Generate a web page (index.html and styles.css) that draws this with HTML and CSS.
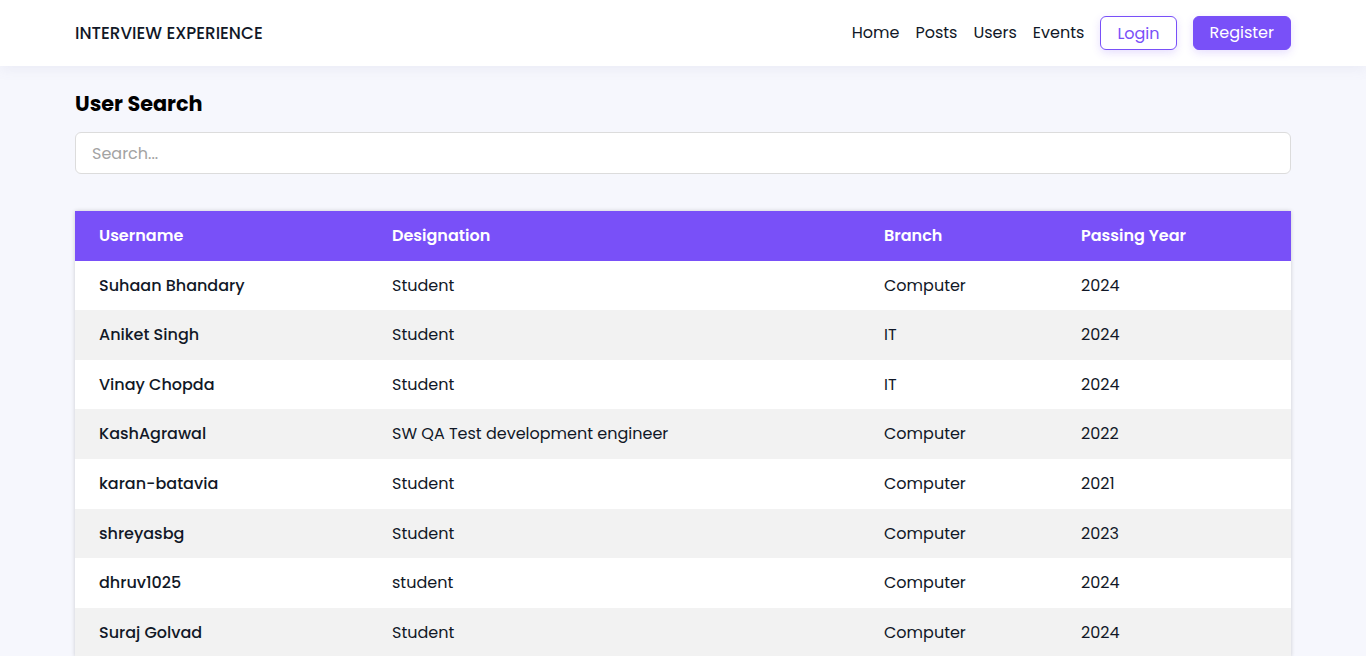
FILE: index.html
```html
<!DOCTYPE html>
<html lang="en">
<head>
<meta charset="utf-8">
<title>Interview Experience - Users</title>
<link rel="stylesheet" href="styles.css">
</head>
<body>
<header class="navbar">
  <div class="nav-inner">
    <a class="brand" href="#">INTERVIEW EXPERIENCE</a>
    <nav class="nav-links">
      <a href="#">Home</a>
      <a href="#">Posts</a>
      <a href="#">Users</a>
      <a href="#">Events</a>
      <a href="#" class="btn btn-outline">Login</a>
      <a href="#" class="btn btn-primary">Register</a>
    </nav>
  </div>
</header>
<main class="content">
  <h1 class="title">User Search</h1>
  <input class="search" type="text" placeholder="Search...">
  <div class="table-wrap">
    <table class="users">
      <colgroup>
        <col class="c1"><col class="c2"><col class="c3"><col class="c4">
      </colgroup>
      <thead>
        <tr><th>Username</th><th>Designation</th><th>Branch</th><th>Passing Year</th></tr>
      </thead>
      <tbody>
        <tr><td class="name">Suhaan Bhandary</td><td>Student</td><td>Computer</td><td>2024</td></tr>
        <tr><td class="name">Aniket Singh</td><td>Student</td><td>IT</td><td>2024</td></tr>
        <tr><td class="name">Vinay Chopda</td><td>Student</td><td>IT</td><td>2024</td></tr>
        <tr><td class="name">KashAgrawal</td><td>SW QA Test development engineer</td><td>Computer</td><td>2022</td></tr>
        <tr><td class="name">karan-batavia</td><td>Student</td><td>Computer</td><td>2021</td></tr>
        <tr><td class="name">shreyasbg</td><td>Student</td><td>Computer</td><td>2023</td></tr>
        <tr><td class="name">dhruv1025</td><td>student</td><td>Computer</td><td>2024</td></tr>
        <tr><td class="name">Suraj Golvad</td><td>Student</td><td>Computer</td><td>2024</td></tr>
      </tbody>
    </table>
  </div>
</main>
</body>
</html>
```
FILE: styles.css
```css
* { box-sizing: border-box; }
html, body { margin: 0; padding: 0; }
body {
  background: #f6f7fd;
  font-family: "Poppins", "Open Sans", sans-serif;
  color: #111827;
}
a { text-decoration: none; color: inherit; }

.navbar {
  background: #ffffff;
  height: 66px;
  box-shadow: 0 4px 12px rgba(120, 120, 160, 0.08);
}
.nav-inner {
  max-width: 1216px;
  margin: 0 auto;
  height: 100%;
  padding-bottom: 1px;
  display: flex;
  align-items: center;
  justify-content: space-between;
}
.brand {
  font-size: 16.8px;
  font-weight: 500;
  color: #111827;
}
.nav-links {
  display: flex;
  align-items: center;
  gap: 16px;
  font-size: 16px;
  color: #111827;
}
.btn {
  display: inline-block;
  height: 34px;
  line-height: 33px;
  border-radius: 6px;
  padding: 0 16px;
  border: 1px solid #7950f8;
  box-shadow: 0 3px 8px rgba(121, 80, 248, 0.18);
}
.btn-outline { color: #7950f8; background: #fff; }
.btn-primary { color: #fff; background: #7950f8; line-height: 31px; }

.content {
  max-width: 1216px;
  margin: 0 auto;
  padding-top: 24px;
}
.title {
  margin: 0;
  font-size: 20.8px;
  font-weight: 700;
  line-height: 28px;
  color: #000;
}
.search {
  display: block;
  width: 100%;
  height: 42px;
  margin-top: 14px;
  padding: 0 16px;
  border: 1px solid #dcdcdc;
  border-radius: 6px;
  background: #fff;
  font-family: inherit;
  font-size: 16px;
  color: #111827;
}
.search::placeholder { color: #a3a3a3; }

.table-wrap {
  margin-top: 37px;
  background: #fff;
  box-shadow: 0 0 4px rgba(0, 0, 0, 0.18);
}
.users {
  width: 100%;
  border-collapse: collapse;
  table-layout: fixed;
  font-size: 16px;
}
.c1 { width: 293px; }
.c2 { width: 492px; }
.c3 { width: 197px; }
.c4 { width: 234px; }
.users th, .users td {
  text-align: left;
  padding: 12px 24px;
  line-height: 25.6px;
}
.users th {
  background: #7950f8;
  color: #fff;
  font-weight: 600;
}
.users td { color: #111827; }
.users td.name { font-weight: 500; }
.users tbody tr:nth-child(even) td { background: #f2f2f2; }
```
